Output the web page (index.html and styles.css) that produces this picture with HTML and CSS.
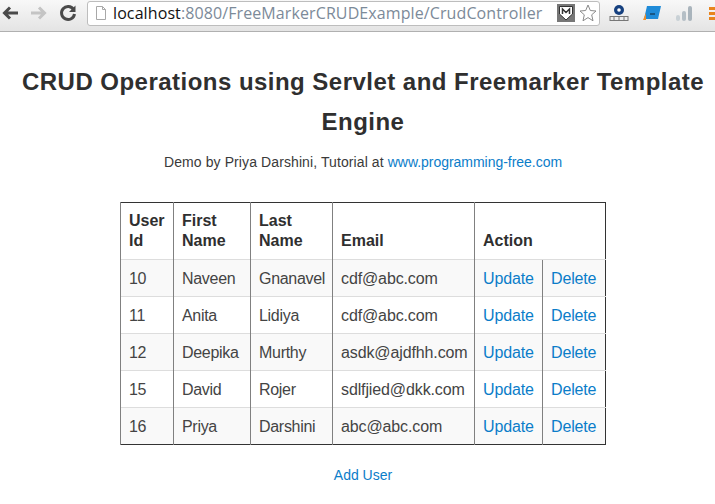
FILE: index.html
```html
<!DOCTYPE html>
<html lang="en">
<head>
    <meta charset="UTF-8">
    <title>CRUD Operations</title>
    <link rel="stylesheet" href="styles.css">
</head>
<body>

<div class="toolbar">
    <svg class="nav-icon" width="20" height="20" viewBox="0 0 20 20"><path d="M18 10H6M10 4.500L4.500 10L10 15.500" fill="none" stroke="#4a4a4a" stroke-width="3"/></svg>
    <svg class="nav-icon" width="20" height="20" viewBox="0 0 20 20"><path d="M2 10H14M10 4.500L15.500 10L10 15.500" fill="none" stroke="#c4c4c4" stroke-width="3"/></svg>
    <svg class="nav-icon" width="20" height="20" viewBox="0 0 20 20"><path d="M15.500 6.500A6.500 6.500 0 1 0 16.500 11" fill="none" stroke="#4a4a4a" stroke-width="3"/><path d="M17.500 2.500V9H11Z" fill="#4a4a4a"/></svg>
    <div class="omnibox">
        <svg width="12" height="14" viewBox="0 0 12 14"><path d="M1.500 .5H7.500L10.500 3.500V13.500H1.500ZM7.500 .5V3.500H10.500" fill="#fff" stroke="#a8a8a8"/></svg>
        <span class="url"><span class="host">localhost</span>:8080/FreeMarkerCRUDExample/CrudController</span>
        <svg class="shield" width="18" height="18" viewBox="0 0 18 18"><rect width="18" height="18" fill="#777"/><path d="M2.500 2.500H15.500V10L9 16L2.500 10Z" fill="#fff" stroke="#333"/><path d="M5.500 10V5L9 8.500L12.500 5V10" fill="none" stroke="#333" stroke-width="1.500"/></svg>
        <svg width="18" height="18" viewBox="0 0 18 18"><path d="M9 1L11.300 6.500L17 7L12.700 10.800L14 16.800L9 13.600L4 16.800L5.300 10.800L1 7L6.700 6.500Z" fill="#fff" stroke="#8a8a8a"/></svg>
    </div>
    <div class="extensions">
        <svg width="20" height="18" viewBox="0 0 20 18"><circle cx="10" cy="6" r="5" fill="#16407f"/><circle cx="10" cy="6" r="1.800" fill="#fff"/><path d="M1 12.500H19M1 16.500H19M1 12V17M5 12.500V17M10 12.500V17M15 12.500V17M19 12V17" fill="none" stroke="#777"/></svg>
        <svg width="20" height="18" viewBox="0 0 20 18"><path d="M5 2H19L16 15H2Z" fill="#1f8bd8"/><path d="M1 16L4 9V16Z" fill="#f0902a"/><path d="M8 10H13" stroke="#123" stroke-width="1"/></svg>
        <svg width="18" height="18" viewBox="0 0 18 18"><rect x="1" y="11" width="4" height="6" rx="2" fill="#c9d1d6"/><rect x="7" y="7" width="4" height="10" rx="2" fill="#b5bfc6"/><rect x="13" y="2" width="4" height="15" rx="2" fill="#a9b4bc"/></svg>
        <div class="menu-icon"><span></span><span></span><span></span></div>
    </div>
</div>

<div class="page">
    <h1>CRUD Operations using Servlet and Freemarker Template Engine</h1>
    <p class="byline">Demo by Priya Darshini, Tutorial at <a href="#">www.programming-free.com</a></p>

    <table class="users">
        <colgroup>
            <col class="col-id"><col class="col-first"><col class="col-last"><col class="col-email"><col class="col-update"><col class="col-delete">
        </colgroup>
        <thead>
            <tr>
                <th>User Id</th>
                <th>First Name</th>
                <th>Last Name</th>
                <th>Email</th>
                <th colspan="2">Action</th>
            </tr>
        </thead>
        <tbody>
            <tr><td>10</td><td>Naveen</td><td>Gnanavel</td><td>cdf@abc.com</td><td><a href="#">Update</a></td><td><a href="#">Delete</a></td></tr>
            <tr><td>11</td><td>Anita</td><td>Lidiya</td><td>cdf@abc.com</td><td><a href="#">Update</a></td><td><a href="#">Delete</a></td></tr>
            <tr><td>12</td><td>Deepika</td><td>Murthy</td><td>asdk@ajdfhh.com</td><td><a href="#">Update</a></td><td><a href="#">Delete</a></td></tr>
            <tr><td>15</td><td>David</td><td>Rojer</td><td>sdlfjied@dkk.com</td><td><a href="#">Update</a></td><td><a href="#">Delete</a></td></tr>
            <tr><td>16</td><td>Priya</td><td>Darshini</td><td>abc@abc.com</td><td><a href="#">Update</a></td><td><a href="#">Delete</a></td></tr>
        </tbody>
    </table>

    <p class="add-user"><a href="#">Add User</a></p>
</div>

</body>
</html>
```

FILE: styles.css
```css
body {
    font-family: "Liberation Sans", Arial, sans-serif;
    font-size: 14px;
    color: #333;
    background-color: white;
    margin: 0;
    padding: 0;
    overflow: hidden;
}
a {
    color: #0b7dc9;
    text-decoration: none;
}
.toolbar {
    display: flex;
    align-items: center;
    height: 32px;
    box-sizing: border-box;
    padding: 0 0 5px 0;
    background: linear-gradient(#f8f8f8, #e4e4e4);
    border-bottom: 1px solid #b0b0b0;
    overflow: hidden;
}
.nav-icon {
    flex: none;
    margin-right: 9px;
}
.omnibox {
    flex: none;
    display: flex;
    align-items: center;
    gap: 4px;
    box-sizing: border-box;
    width: 513px;
    height: 25px;
    padding: 0 2px 0 7px;
    background-color: white;
    border: 1px solid #bdbdbd;
    border-radius: 3px;
}
.url {
    flex: 1;
    margin-left: 2px;
    font-family: "Open Sans", sans-serif;
    font-size: 16px;
    letter-spacing: .1px;
    color: #7c8a99;
    white-space: nowrap;
    overflow: hidden;
}
.host {
    color: #111;
}
.extensions {
    flex: none;
    display: flex;
    align-items: center;
    gap: 13px;
    margin-left: 9px;
}
.menu-icon {
    display: flex;
    flex-direction: column;
    gap: 2px;
    width: 14px;
    margin-left: 3px;
}
.menu-icon span {
    height: 3px;
    background-color: #e8841e;
}
.page {
    margin-left: 11px;
    text-align: center;
}
h1 {
    width: 690px;
    margin: 30px auto 0;
    font-size: 24px;
    line-height: 40px;
    font-weight: bold;
    letter-spacing: .47px;
    color: #2f2f2f;
}
.byline {
    margin: 10px 0 0;
    line-height: 20px;
    letter-spacing: .1px;
    color: #3a3a3a;
}
.byline a {
    letter-spacing: -.03px;
}
.users {
    width: 485px;
    margin: 30px 0 0 109px;
    table-layout: fixed;
    border-collapse: collapse;
    border: 1px solid #333;
    font-size: 16px;
    line-height: 20px;
    text-align: left;
}
.col-id { width: 53px; }
.col-first { width: 77px; }
.col-last { width: 82px; }
.col-email { width: 142px; }
.col-update { width: 68px; }
.col-delete { width: 63px; }
.users th, .users td {
    padding: 8px;
    border-left: 1px solid #808080;
    white-space: nowrap;
}
.users th {
    vertical-align: bottom;
    white-space: normal;
    color: #2f2f2f;
}
.users td {
    padding: 9px 8px 7px;
    border-top: 1px solid #ddd;
    letter-spacing: -.3px;
    color: #444;
}
.users td:nth-child(4) {
    letter-spacing: -.12px;
}
.users td a {
    letter-spacing: -.15px;
}
.users tbody tr:nth-child(odd) {
    background-color: #f9f9f9;
}
.add-user {
    margin: 20px 0 0;
    line-height: 20px;
}
```
